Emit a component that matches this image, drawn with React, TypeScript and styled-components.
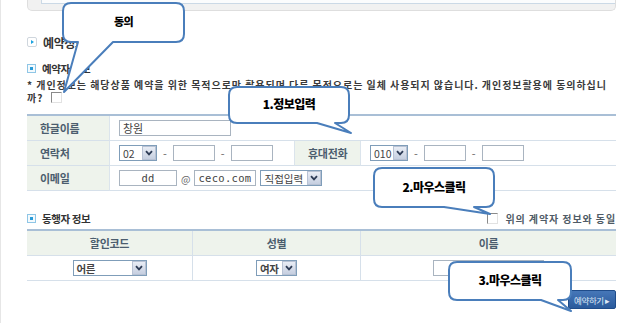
import styled, { createGlobalStyle } from 'styled-components'

const GlobalStyle = createGlobalStyle`
  html, body {
    margin: 0;
    padding: 0;
    background: #fff;
  }
  body {
    font-family: 'Noto Sans CJK KR', 'Noto Sans', sans-serif;
    color: #333;
  }
`

const Page = styled.div`
  position: relative;
  width: 643px;
  height: 323px;
  overflow: hidden;
  background: #fff;
  border-left: 1px solid #e6e6e6;
  box-sizing: border-box;
`

const Content = styled.div`
  width: 589px;
  margin-left: 26px;
  display: flex;
  flex-direction: column;
`

const TopBox = styled.div`
  height: 11px;
  background: #f1f1f1;
  border: 1px solid #dedede;
  border-top: none;
  border-radius: 0 0 5px 5px;
  box-sizing: border-box;
  padding-left: 13px;
`

const TopInner = styled.div`
  height: 3px;
  background: #fbfcfd;
  border-left: 1px solid #cbd9e6;
  border-bottom: 1px solid #cbd9e6;
`

const Heading = styled.div<{ $top: number; $size: number }>`
  display: flex;
  align-items: center;
  gap: 6px;
  height: 14px;
  margin-top: ${(p) => p.$top}px;
  font-size: ${(p) => p.$size}px;
  font-weight: bold;
  letter-spacing: -0.4px;
  color: #333;
`

const MainIcon = styled.span`
  position: relative;
  width: 8px;
  height: 8px;
  border: 1px solid #cfd6dd;
  border-radius: 2px;
  background: #fff;
  &::after {
    content: '';
    position: absolute;
    left: 3px;
    top: 2px;
    border-left: 3px solid #1aa3e0;
    border-top: 2px solid transparent;
    border-bottom: 2px solid transparent;
  }
`

const SubIcon = styled.span`
  position: relative;
  width: 7px;
  height: 7px;
  border: 1px solid #8fc6e6;
  background: #f4fafd;
  &::after {
    content: '';
    position: absolute;
    left: 2px;
    top: 2px;
    width: 3px;
    height: 3px;
    background: #2a9bd8;
  }
`

const Notice = styled.div`
  margin-top: 3px;
  font-size: 10px;
  line-height: 13px;
  font-weight: bold;
  color: #3a3a3a;
  letter-spacing: 0.95px;
  white-space: nowrap;
`

const NoticeTail = styled.div`
  display: flex;
  align-items: center;
  gap: 8px;
`

const Check = styled.span`
  display: inline-block;
  width: 9px;
  height: 9px;
  border: 1px solid #8a8a8a;
  border-right-color: #e2e2e2;
  border-bottom-color: #e2e2e2;
  background: #fff;
`

const Grid = styled.div<{ $cols: string; $top: number }>`
  display: grid;
  grid-template-columns: ${(p) => p.$cols};
  margin-top: ${(p) => p.$top}px;
  border-top: 2px solid #a9bfd6;
`

const Label = styled.div<{ $left?: boolean }>`
  display: flex;
  align-items: center;
  height: 25px;
  box-sizing: border-box;
  padding-left: 13px;
  background: #eef3ec;
  border-bottom: 1px solid #d6e0ea;
  border-right: 1px solid #dbe4ec;
  border-left: ${(p) => (p.$left ? '1px solid #dbe4ec' : 'none')};
  font-size: 11px;
  font-weight: bold;
  letter-spacing: -0.3px;
  color: #4b5d6e;
`

const Cell = styled.div<{ $span?: number }>`
  display: flex;
  align-items: center;
  height: 25px;
  box-sizing: border-box;
  padding-left: 9px;
  grid-column: ${(p) => (p.$span ? `span ${p.$span}` : 'auto')};
  border-bottom: 1px solid #d6e0ea;
  font-size: 11px;
  color: #555;
`

const HeadCell = styled.div<{ $last?: boolean }>`
  display: flex;
  align-items: center;
  justify-content: center;
  height: 25px;
  box-sizing: border-box;
  background: #eef3ec;
  border-bottom: 1px solid #d6e0ea;
  border-right: ${(p) => (p.$last ? 'none' : '1px solid #d6e0ea')};
  font-size: 11px;
  font-weight: bold;
  letter-spacing: -0.3px;
  color: #4b5d6e;
`

const BodyCell = styled(HeadCell)`
  background: #fff;
`

const TextInput = styled.input<{ $w: number; $center?: boolean }>`
  width: ${(p) => p.$w}px;
  height: 16px;
  box-sizing: border-box;
  margin: 0;
  padding: 0 3px;
  border: 1px solid #a9b4c0;
  font-family: 'Noto Sans CJK KR', sans-serif;
  font-size: 11px;
  line-height: 14px;
  color: #444;
  text-align: ${(p) => (p.$center ? 'center' : 'left')};
  outline: none;
  background: #fff;
`

const MonoInput = styled(TextInput)`
  font-family: 'DejaVu Sans Mono', 'Liberation Mono', monospace;
  font-size: 10.5px;
  letter-spacing: 0.3px;
`

const Select = styled.div<{ $w: number }>`
  display: flex;
  align-items: center;
  justify-content: space-between;
  width: ${(p) => p.$w}px;
  height: 16px;
  box-sizing: border-box;
  border: 1px solid #7f9db9;
  background: #fff;
  padding-left: 3px;
  font-size: 10.5px;
  color: #444;
`

const SelectButton = styled.span`
  display: flex;
  align-items: center;
  justify-content: center;
  width: 14px;
  height: 14px;
  box-sizing: border-box;
  border: 1px solid #b8c2d4;
  background: linear-gradient(#e9edf5, #c6cfe0);
  svg {
    display: block;
  }
`

const Dash = styled.span`
  margin: 0 6px;
  color: #666;
  font-size: 11px;
`

const At = styled.span`
  margin: 0 4px;
  color: #666;
  font-size: 10px;
`

const Gap = styled.span`
  width: 4px;
`

const CompanionRow = styled.div`
  display: flex;
  justify-content: space-between;
  align-items: flex-end;
  height: 20px;
  margin-top: 14px;
`

const SameAs = styled.label`
  display: flex;
  align-items: center;
  gap: 7px;
  font-size: 10px;
  font-weight: bold;
  letter-spacing: 0.9px;
  color: #4f5b66;
  line-height: 13px;
`

const Submit = styled.button`
  align-self: flex-end;
  margin-top: 9px;
  width: 48px;
  height: 19px;
  padding: 0;
  border: 1px solid #1f4c8a;
  border-radius: 2px;
  background: linear-gradient(#4677b8, #2a5a9c);
  color: #dfe9f6;
  font-family: 'Noto Sans CJK KR', sans-serif;
  font-size: 8.5px;
  letter-spacing: -0.4px;
`

const Bubble = styled.div<{ $x: number; $y: number; $w: number; $h: number }>`
  position: absolute;
  left: ${(p) => p.$x}px;
  top: ${(p) => p.$y}px;
  width: ${(p) => p.$w}px;
  height: ${(p) => p.$h}px;
  display: flex;
  align-items: center;
  justify-content: center;
  svg {
    position: absolute;
    left: 0;
    top: 0;
    overflow: visible;
  }
`

const BubbleText = styled.span<{ $size: number }>`
  position: relative;
  margin-top: -3px;
  font-size: ${(p) => p.$size}px;
  font-weight: 900;
  letter-spacing: -0.5px;
  color: #000;
`

type CalloutProps = {
  x: number
  y: number
  w: number
  h: number
  base: [number, number]
  tip: [number, number]
  size: number
  text: string
}

function Callout({ x, y, w, h, base, tip, size, text }: CalloutProps) {
  const r = 8
  const d = `M${r},0 H${w - r} Q${w},0 ${w},${r} V${h - r} Q${w},${h} ${w - r},${h} H${base[1]} L${tip[0]},${tip[1]} L${base[0]},${h} H${r} Q0,${h} 0,${h - r} V${r} Q0,0 ${r},0 Z`
  return (
    <Bubble $x={x} $y={y} $w={w} $h={h}>
      <svg width={w} height={h}>
        <path d={d} fill="#fff" stroke="#4a7ebb" strokeWidth="2" strokeLinejoin="round" />
      </svg>
      <BubbleText $size={size}>{text}</BubbleText>
    </Bubble>
  )
}

function Chevron() {
  return (
    <svg width="8" height="6" viewBox="0 0 8 6">
      <path d="M1 1.2 L4 4.4 L7 1.2" fill="none" stroke="#2d3b55" strokeWidth="1.8" />
    </svg>
  )
}

function Dropdown({ w, value }: { w: number; value: string }) {
  return (
    <Select $w={w}>
      <span>{value}</span>
      <SelectButton>
        <Chevron />
      </SelectButton>
    </Select>
  )
}

export default function App() {
  return (
    <Page>
      <GlobalStyle />
      <Content>
        <TopBox>
          <TopInner />
        </TopBox>

        <Heading $top={24} $size={12}>
          <MainIcon />
          예약정보
        </Heading>

        <Heading $top={12} $size={10.5}>
          <SubIcon />
          예약자 정보
        </Heading>

        <Notice>
          * 개인정보는 해당상품 예약을 위한 목적으로만 활용되며 다른 목적으로는 일체 사용되지 않습니다. 개인정보활용에 동의하십니
          <NoticeTail>
            까?
            <Check />
          </NoticeTail>
        </Notice>

        <Grid $cols="83px 184px 67px 1fr" $top={10}>
          <Label>한글이름</Label>
          <Cell $span={3}>
            <TextInput $w={112} readOnly value="창원" />
          </Cell>

          <Label>연락처</Label>
          <Cell>
            <Dropdown w={38} value="02" />
            <Dash>-</Dash>
            <TextInput $w={42} readOnly value="" />
            <Dash>-</Dash>
            <TextInput $w={42} readOnly value="" />
          </Cell>
          <Label $left>휴대전화</Label>
          <Cell>
            <Dropdown w={38} value="010" />
            <Dash>-</Dash>
            <TextInput $w={42} readOnly value="" />
            <Dash>-</Dash>
            <TextInput $w={42} readOnly value="" />
          </Cell>

          <Label>이메일</Label>
          <Cell $span={3}>
            <MonoInput $w={58} $center readOnly value="dd" />
            <At>@</At>
            <MonoInput $w={62} readOnly value="ceco.com" />
            <Gap />
            <Dropdown w={62} value="직접입력" />
          </Cell>
        </Grid>

        <CompanionRow>
          <Heading $top={0} $size={10.5}>
            <SubIcon />
            동행자 정보
          </Heading>
          <SameAs>
            <Check />
            위의 계약자 정보와 동일
          </SameAs>
        </CompanionRow>

        <Grid $cols="166px 168px 1fr" $top={4}>
          <HeadCell>할인코드</HeadCell>
          <HeadCell>성별</HeadCell>
          <HeadCell $last>이름</HeadCell>
          <BodyCell>
            <Dropdown w={74} value="어른" />
          </BodyCell>
          <BodyCell>
            <Dropdown w={41} value="여자" />
          </BodyCell>
          <BodyCell $last>
            <TextInput $w={111} readOnly value="" />
          </BodyCell>
        </Grid>

        <Submit>예약하기 ▸</Submit>
      </Content>

      <Callout x={62} y={3} w={121} h={39} base={[15, 50]} tip={[1, 89]} size={11} text="동의" />
      <Callout x={228} y={87} w={120} h={36} base={[88, 106]} tip={[122, 46]} size={12} text="1.정보입력" />
      <Callout x={373} y={168} w={120} h={39} base={[70, 100]} tip={[116, 46]} size={12} text="2.마우스클릭" />
      <Callout x={448} y={262} w={122} h={38} base={[92, 109]} tip={[122, 49]} size={12} text="3.마우스클릭" />
    </Page>
  )
}
